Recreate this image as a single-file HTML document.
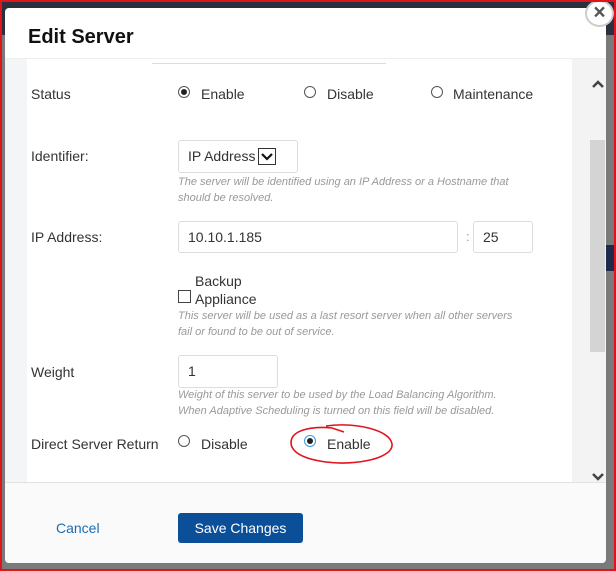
<!DOCTYPE html>
<html><head><style>
*{margin:0;padding:0;box-sizing:border-box}
body{width:616px;height:571px;overflow:hidden;position:relative;background:#555;font-family:"Liberation Sans",sans-serif;color:#333}
.abs{position:absolute}
.lbl{font-size:14px;color:#333}
.hint{font-size:11px;font-style:italic;color:#999;line-height:16px}
.inp{position:absolute;border:1px solid #ddd;border-radius:3px;background:#fff;font-size:14px;padding-left:9px;line-height:30px}
.rad{position:absolute;width:12px;height:12px;border:1px solid #555;border-radius:50%;background:#fff}
.rad.on::after{content:"";position:absolute;left:2px;top:2px;width:6px;height:6px;border-radius:50%;background:#222}
</style></head><body>
<div class="abs" style="left:0;top:0;width:616px;height:571px;background:#2a3040"></div>
<div class="abs" style="left:0;top:35px;width:616px;height:536px;background:#7a7a7a"></div>
<div class="abs" style="left:606px;top:245px;width:10px;height:26px;background:#1d2a4a"></div>
<div class="abs" style="left:5px;top:8px;width:601px;height:555px;background:#fff;border-radius:4px;overflow:hidden">
 <div class="abs" style="left:0;top:50px;width:601px;height:1px;background:#eee"></div>
 <div class="abs" style="left:0;top:51px;width:22px;height:423px;background:#f4f5f7"></div>
 <div class="abs" style="left:567px;top:51px;width:34px;height:423px;background:#f3f3f4"></div>
 <div class="abs" style="left:585px;top:132px;width:15px;height:212px;background:#d4d4d4"></div>
 <div class="abs" style="left:0;top:474px;width:601px;height:81px;background:#fafafa;border-top:1px solid #e2e2e2"></div>
</div>
<div class="abs" style="left:28px;top:26px;font-size:20px;font-weight:bold;color:#111">Edit Server</div>
<div class="abs" style="left:152px;top:63px;width:234px;height:1px;background:#ddd"></div>
<div class="abs" style="left:585px;top:0px;width:29px;height:27px;border-radius:50%;background:#fff;border:2px solid #ccc;color:#555;font-size:21px;font-weight:bold;text-align:center;line-height:22px">×</div>
<svg class="abs" style="left:592px;top:79px" width="12" height="10"><path d="M1 8 L6 3 L11 8" stroke="#444" stroke-width="2.5" fill="none"/></svg>
<svg class="abs" style="left:592px;top:472px" width="12" height="10"><path d="M1 2 L6 7 L11 2" stroke="#444" stroke-width="2.5" fill="none"/></svg>

<div class="abs lbl" style="left:31px;top:86px">Status</div>
<div class="rad on" style="left:178px;top:86px"></div><div class="abs lbl" style="left:201px;top:86px">Enable</div>
<div class="rad" style="left:304px;top:86px"></div><div class="abs lbl" style="left:327px;top:86px">Disable</div>
<div class="rad" style="left:431px;top:86px"></div><div class="abs lbl" style="left:453px;top:86px">Maintenance</div>

<div class="abs lbl" style="left:31px;top:148px">Identifier:</div>
<div class="inp" style="left:178px;top:140px;width:120px;height:33px;line-height:31px">IP Address</div>
<div class="abs" style="left:258px;top:148px;width:18px;height:17px;border:1px solid #333;background:#fff"><svg width="16" height="15"><path d="M3 5 L8 10 L13 5" stroke="#111" stroke-width="2.2" fill="none"/></svg></div>
<div class="abs hint" style="left:178px;top:174px;width:360px">The server will be identified using an IP Address or a Hostname that should be resolved.</div>

<div class="abs lbl" style="left:31px;top:229px">IP Address:</div>
<div class="inp" style="left:178px;top:221px;width:280px;height:32px">10.10.1.185</div>
<div class="abs" style="left:466px;top:229px;font-size:13px;color:#999">:</div>
<div class="inp" style="left:473px;top:221px;width:60px;height:32px">25</div>

<div class="abs lbl" style="left:195px;top:273px">Backup</div>
<div class="abs" style="left:178px;top:290px;width:13px;height:13px;border:1px solid #444;background:#fff"></div>
<div class="abs lbl" style="left:195px;top:291px">Appliance</div>
<div class="abs hint" style="left:178px;top:308px;width:340px">This server will be used as a last resort server when all other servers fail or found to be out of service.</div>

<div class="abs lbl" style="left:31px;top:364px">Weight</div>
<div class="inp" style="left:178px;top:355px;width:100px;height:33px;line-height:31px">1</div>
<div class="abs hint" style="left:178px;top:387px;width:360px">Weight of this server to be used by the Load Balancing Algorithm.<br>When Adaptive Scheduling is turned on this field will be disabled.</div>

<div class="abs lbl" style="left:31px;top:436px">Direct Server Return</div>
<div class="rad" style="left:178px;top:435px"></div><div class="abs lbl" style="left:201px;top:436px">Disable</div>
<div class="rad on" style="left:304px;top:435px;border-color:#3a9ad9"></div><div class="abs lbl" style="left:327px;top:436px">Enable</div>
<svg class="abs" style="left:286px;top:420px" width="112" height="48"><path d="M40 6 C70 2 104 10 106 24 C108 38 70 46 40 42 C10 38 2 28 6 18 C10 10 26 6 46 8 L58 12" stroke="#e0141b" stroke-width="1.6" fill="none"/></svg>

<div class="abs" style="left:56px;top:520px;font-size:14px;color:#1b6db5">Cancel</div>
<div class="abs" style="left:178px;top:513px;width:125px;height:30px;background:#0b4f98;border-radius:3px;color:#fff;font-size:14px;text-align:center;line-height:30px">Save Changes</div>

<div class="abs" style="left:0;top:0;width:616px;height:571px;border:2px solid #e0141b"></div>
</body></html>
